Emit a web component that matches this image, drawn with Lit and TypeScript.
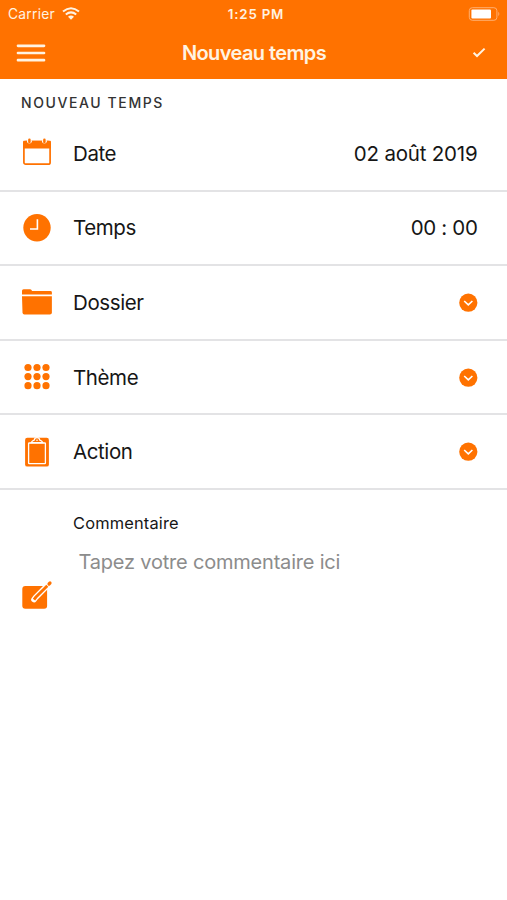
import { LitElement, html, svg, css } from "lit";
import { customElement } from "lit/decorators.js";

const icons = {
  date: svg`<rect x="3.9" y="4.6" width="26.2" height="22.6" rx="1.8" fill="none" stroke="#ff7200" stroke-width="1.7"/>
    <path d="M3.1 4.6Q3.1 3.8 3.9 3.8H30.1Q30.9 3.8 30.9 4.6V11.6H3.1Z" fill="#ff7200"/>
    <circle cx="9.4" cy="4.2" r="2.4" fill="#fff"/><circle cx="24.4" cy="4.2" r="2.4" fill="#fff"/>
    <path d="M9.4 2.8V5M24.4 2.8V5" stroke="#ff7200" stroke-width="2.5" stroke-linecap="round"/>`,
  time: svg`<circle cx="17" cy="15.8" r="13.7" fill="#ff7200"/>
    <path d="M17.4 7.2V17H10" fill="none" stroke="#fff" stroke-width="1.6"/>`,
  folder: svg`<path d="M2 4.8Q2 3.2 3.6 3.2H10Q11 3.2 11.5 4.1L12 5.1H30.4Q31.9 5.1 31.9 6.5V8.6H2Z" fill="#ff7200"/>
    <path d="M2 10.2H31.9V26.4Q31.9 28.4 29.9 28.4H4.4Q2.6 28.4 2.5 26.4Z" fill="#ff7200"/>`,
  theme: svg`${[8, 17, 26].map((x) =>
    [6.5, 15.6, 24.7].map((y) => svg`<circle cx=${x} cy=${y} r="3.6" fill="#ff7200"/>`)
  )}`,
  action: svg`<rect x="5.1" y="1.8" width="23.8" height="28.8" rx="2.2" fill="#ff7200"/>
    <rect x="8.6" y="7" width="16.8" height="20.6" rx=".6" fill="none" stroke="#fff" stroke-width="1.3"/>
    <path d="M11.2 6.6Q12.2 4.6 14.2 4.2Q14.6 1.6 17 1.6Q19.4 1.6 19.8 4.2Q21.8 4.6 22.8 6.6Z" fill="#ff7200" stroke="#fff" stroke-width="1.2"/>
    <circle cx="17" cy="4.3" r=".8" fill="#fff"/>`,
  edit: svg`<rect x="2.3" y="7" width="24.8" height="22.8" rx="3" fill="#ff7200"/>
    <path d="M29.4 4.6L15.6 18.4L14 20.6" fill="none" stroke="#fff" stroke-width="5.6" stroke-linecap="round" stroke-linejoin="round"/>
    <path d="M27.3 6.7L16 18L14 20.6" fill="none" stroke="#ff7200" stroke-width="2.9" stroke-linecap="butt" stroke-linejoin="round"/>
    <path d="M29 5L30 4" stroke="#ff7200" stroke-width="3.2" stroke-linecap="round"/>`,
};

type IconName = keyof typeof icons;

interface Row {
  icon: IconName;
  label: string;
  key: string;
  value?: string;
}

const rows: Row[] = [
  { icon: "date", label: "Date", key: "date", value: "02 août 2019" },
  { icon: "time", label: "Temps", key: "temps", value: "00 : 00" },
  { icon: "folder", label: "Dossier", key: "dossier" },
  { icon: "theme", label: "Thème", key: "theme" },
  { icon: "action", label: "Action", key: "action" },
];

const icon = (name: IconName) =>
  html`<svg class="icon" width="34" height="32" viewBox="0 0 34 32">${icons[name]}</svg>`;

@customElement("app-root")
export class AppRoot extends LitElement {
  static styles = css`
    :host {
      display: block;
      height: 900px;
      background: #fff;
      color: #161616;
      font-family: Inter, "Liberation Sans", sans-serif;
      overflow: hidden;
    }
    * { box-sizing: border-box; }
    svg { display: block; flex: none; }
    header { height: 79px; background: #ff7200; color: #fff3e2; }
    .status, .nav {
      display: grid;
      grid-template-columns: 1fr auto 1fr;
      align-items: center;
    }
    .status { height: 27px; padding: 0 7px 0 8px; font-size: 13.8px; }
    .carrier { display: flex; align-items: center; gap: 7px; letter-spacing: 0.25px; }
    .clock { font-weight: 600; font-size: 13.3px; letter-spacing: 0.8px; padding-left: 4px; }
    .end { justify-self: end; }
    .nav { height: 52px; padding: 0 20px 0 16px; }
    h1 { margin: 0; padding-left: 5px; font-size: 20px; font-weight: 600; letter-spacing: -0.6px; line-height: 52px; }
    h2 {
      margin: 0;
      height: 38px;
      padding: 0 21px;
      font-size: 14px;
      line-height: 48px;
      font-weight: 500;
      letter-spacing: 1.6px;
      color: #333;
    }
    .row {
      height: 74.6px;
      display: flex;
      align-items: center;
      padding: 0 29.5px 0 20px;
      border-bottom: 2px solid #e3e3e5;
      font-size: 20.5px;
    }
    .label { margin-left: 19px; flex: 1; letter-spacing: -0.4px; }
    .comment { display: flex; padding: 20px 20px 0; }
    .comment .icon { margin-top: 69px; }
    .field { margin-left: 19px; }
    .caption { font-size: 16.4px; line-height: 26px; letter-spacing: 0.18px; }
    .placeholder { font-size: 20px; line-height: 30px; padding: 11px 0 0 5.5px; color: #8c8c8c; letter-spacing: -0.2px; }
    .date { letter-spacing: -0.2px; }
    .temps { letter-spacing: -0.35px; }
  `;

  render() {
    return html`
      <header>
        <div class="status">
          <span class="carrier"><span>Carrier</span>
            <svg width="18" height="13" viewBox="0 0 18 13" fill="none" stroke="#fff3e2" stroke-width="2">
              <path d="M1 4.6Q9-2.2 17 4.6M3.8 7.6Q9 3.2 14.2 7.6"/>
              <path d="M6 9.8Q9 7.2 12 9.8L9 12.8Z" fill="#fff3e2" stroke="none"/>
            </svg>
          </span>
          <span class="clock">1:25 PM</span>
          <svg class="end" width="32" height="14" viewBox="0 0 32 14">
            <rect x="1.3" y=".7" width="27.6" height="12.6" rx="3" fill="none" stroke="#ffaf70" stroke-width="1"/>
            <rect x="3.4" y="2.4" width="19.6" height="9.2" rx="1" fill="#fff"/>
            <path d="M30.3 4.8Q32.3 7 30.3 9.2Z" fill="#ffaf70"/>
          </svg>
        </div>
        <div class="nav">
          <svg width="30" height="20" viewBox="0 0 30 20" stroke="#fff3e2" stroke-width="2.7" stroke-linecap="round">
            <path d="M2 2.8H28M2 10H28M2 17.2H28"/>
          </svg>
          <h1>Nouveau temps</h1>
          <svg class="end" width="15" height="12" viewBox="0 0 15 12" fill="none" stroke="#fff3e2" stroke-width="2">
            <path d="M1.6 5.8L5 9L12.6 1.6"/>
          </svg>
        </div>
      </header>
      <h2>NOUVEAU TEMPS</h2>
      ${rows.map(
        (r) => html`<div class="row">
          ${icon(r.icon)}
          <span class="label">${r.label}</span>
          ${r.value
            ? html`<span class=${r.key}>${r.value}</span>`
            : html`<svg width="19" height="19" viewBox="0 0 19 19">
                <circle cx="9.3" cy="9.7" r="9.1" fill="#ff7200"/>
                <path d="M5.2 8L9.3 11.8L13.4 8" fill="none" stroke="#fff" stroke-width="1.6"/>
              </svg>`}
        </div>`
      )}
      <div class="comment">
        ${icon("edit")}
        <div class="field">
          <div class="caption">Commentaire</div>
          <div class="placeholder">Tapez votre commentaire ici</div>
        </div>
      </div>
    `;
  }
}
